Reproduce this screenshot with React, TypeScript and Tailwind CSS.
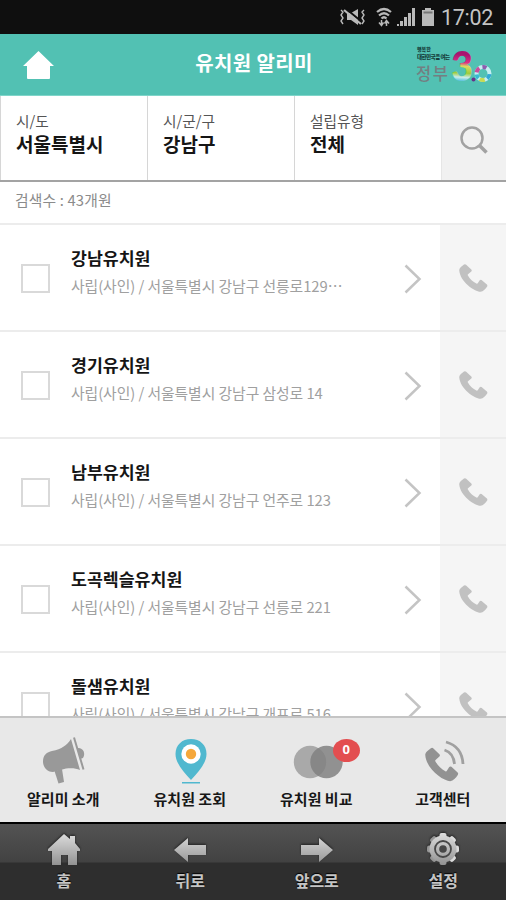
import * as React from "react";

const filters = [
  { label: "시/도", value: "서울특별시" },
  { label: "시/군/구", value: "강남구" },
  { label: "설립유형", value: "전체" },
];

const schools = [
  { id: 1, name: "강남유치원", address: "사립(사인) / 서울특별시 강남구 선릉로129⋯" },
  { id: 2, name: "경기유치원", address: "사립(사인) / 서울특별시 강남구 삼성로 14" },
  { id: 3, name: "남부유치원", address: "사립(사인) / 서울특별시 강남구 언주로 123" },
  { id: 4, name: "도곡렉슬유치원", address: "사립(사인) / 서울특별시 강남구 선릉로 221" },
  { id: 5, name: "돌샘유치원", address: "사립(사인) / 서울특별시 강남구 개포로 516" },
];

const handset =
  "M5 .6 Q6.200 -.3 7.200 .8 L12.300 5.600 Q13.200 6.600 12.300 7.500 L9 10.300 Q8.500 10.800 8.900 11.500 C10.800 14.800 14 17.900 17.400 19.600 Q18.200 20 18.700 19.300 L20.700 16.200 Q21.500 15.300 22.600 16 L27.900 20.600 Q28.800 21.600 28 22.700 C26.300 25.300 24.200 27.400 21.500 27.800 C15.500 27.600 1 18 .2 6 C.3 4 3 2 5 .6 Z";

function StatusBar() {
  return (
    <div className="flex h-[34px] shrink-0 items-center justify-end bg-[#0f0f0f] pr-[13px] text-[#b9b9b9]">
      <svg width="28" height="20" viewBox="0 0 28 20" className="mr-[9px]" fill="none" stroke="currentColor">
        <path d="M8 6h4l7-4v16l-7-5H8z" fill="currentColor" stroke="none" />
        <path d="M6 1l17 14" stroke="#0f0f0f" strokeWidth="2" />
        <path d="M5 3l17 14" strokeWidth="2.200" />
        <path d="M2 3l2 2-2 3 2 3-2 3 2 3M25 3l-2 2 2 3-2 3 2 3-2 3" strokeWidth="1.400" />
      </svg>
      <svg width="16" height="20" viewBox="0 0 16 20" className="mr-[5px]" fill="none" stroke="currentColor" strokeWidth="2.200">
        <path d="M1 5Q8-1 15 5M3 8.500Q8 4 13 8.500M5.500 11.500Q8 9 10.500 11.500" />
        <path d="M5.500 13v5M3 15.500l2.500 3 2-3M10.500 19v-5M8.500 16.500l2-3 2.500 3" strokeWidth="1.500" />
      </svg>
      <svg width="18" height="18" viewBox="0 0 18 18" className="mr-[7px]" fill="currentColor">
        <path d="M0 16h2v2H0zM3 13h3v5H3zM7 9h3v9H7zM11 5h3v13h-3zM15 0h3v18h-3z" />
      </svg>
      <svg width="12" height="18" viewBox="0 0 12 18" className="mr-[7px]" fill="currentColor">
        <path d="M3 0h6v2h3v16H0V2h3z" />
        <path d="M1.500 3.500h9v2h-9z" fill="#777" />
      </svg>
      <span className="mt-[2px] font-['Roboto',sans-serif] text-[21.500px] leading-none tracking-[-0.3px] text-[#c4c4c4]">17:02</span>
    </div>
  );
}

function GovLogo() {
  return (
    <svg width="80" height="54" viewBox="0 0 80 54" fontFamily="'Noto Sans CJK KR', sans-serif">
      <defs>
        <linearGradient id="three" gradientUnits="userSpaceOnUse" x1="46" y1="13" x2="44" y2="44">
          <stop offset=".1" stopColor="#a8156f" />
          <stop offset=".36" stopColor="#dd2f86" />
          <stop offset=".48" stopColor="#d9dd62" />
          <stop offset=".7" stopColor="#9fcb3c" />
          <stop offset=".84" stopColor="#c9ecec" />
          <stop offset="1" stopColor="#2fb1d6" />
        </linearGradient>
      </defs>
      <text x="4" y="12.500" fontSize="5" fontWeight="900" fill="#16403c">행복한</text>
      <text x="4" y="20.500" fontSize="5.500" fontWeight="900" fill="#16403c" textLength="33">대한민국을 여는</text>
      <text x="3" y="41.500" fontSize="16.500" fontWeight="500" fill="#737f82" textLength="32">정부</text>
      <text x="38" y="43" fontSize="41" fontWeight="900" fontFamily="Lato, sans-serif" fill="url(#three)" textLength="22" lengthAdjust="spacingAndGlyphs">3</text>
      <circle cx="60.500" cy="41.500" r="2" fill="#67338a" />
      <g fill="none" strokeWidth="4">
        <circle cx="70" cy="35.500" r="6.500" stroke="#c5eef2" />
        <circle cx="70" cy="35.500" r="6.500" stroke="#c94d9c" strokeDasharray="5 35.840" transform="rotate(190 70 35.500)" />
        <circle cx="70" cy="35.500" r="6.500" stroke="#8e5eb0" strokeDasharray="4 36.840" transform="rotate(265 70 35.500)" />
        <circle cx="70" cy="35.500" r="6.500" stroke="#32a8d5" strokeDasharray="5 35.840" transform="rotate(5 70 35.500)" />
        <circle cx="70" cy="35.500" r="6.500" stroke="#c7da52" strokeDasharray="5 35.840" transform="rotate(75 70 35.500)" />
        <circle cx="70" cy="35.500" r="6.500" stroke="#37bad3" strokeDasharray="4 36.840" transform="rotate(135 70 35.500)" />
      </g>
    </svg>
  );
}

function Header() {
  return (
    <header className="grid h-[62px] shrink-0 grid-cols-[100px_1fr_93px] items-center border-b border-[#7fd5c9] bg-[#52c1b3]">
      <svg width="31" height="28" viewBox="0 0 31 28" className="ml-[23px]" fill="#fff">
        <path d="M15.500 0L31 15h-4v12q0 1-1 1H5q-1 0-1-1V15H0z" />
      </svg>
      <h1 className="-mt-[4px] pr-[5px] text-center text-[20px] leading-[28px] font-bold tracking-[0.400px] text-white">유치원 알리미</h1>
      <GovLogo />
    </header>
  );
}

function SearchBar() {
  return (
    <div className="flex h-[86px] shrink-0 border-b-2 border-[#a3a3a3]">
      {filters.map((filter) => (
        <div key={filter.label} className="w-[147px] border-l border-[#d6d6d6] pt-[14px] pl-[15px]">
          <div className="text-[14.700px] leading-[22px] text-[#555]">{filter.label}</div>
          <div className="text-[19px] leading-[24px] font-bold text-[#151515]">{filter.value}</div>
        </div>
      ))}
      <div className="flex flex-1 items-center justify-center border-l border-[#e6e6e6] bg-[#f1f1f1]">
        <svg width="28" height="28" viewBox="0 0 28 28" className="mt-[4px]" fill="none" stroke="#a2a2a2">
          <circle cx="12" cy="12" r="10.500" strokeWidth="2.500" />
          <path d="M19.500 19.500l7 7" strokeWidth="3.500" />
        </svg>
      </div>
    </div>
  );
}

function SchoolRow({ school }: { school: { name: string; address: string } }) {
  return (
    <li className="flex h-[107px] shrink-0 border-b-2 border-[#ececec]">
      <div className="mt-[39px] ml-[21px] size-[29px] shrink-0 border-2 border-[#d9d9d9]" />
      <div className="flex-1 pt-[19px] pl-[21px] whitespace-nowrap">
        <div className="text-[17.300px] leading-[28px] font-bold text-[#151515]">{school.name}</div>
        <div className="text-[14.800px] leading-[28px] tracking-[-0.050px] text-[#a0a0a0]">{school.address}</div>
      </div>
      <svg width="18" height="30" viewBox="0 0 18 30" className="mt-[39px] mr-[18px] shrink-0" fill="none" stroke="#c4c4c4" strokeWidth="2.500">
        <path d="M1.500 1.500L15.500 15L1.500 28.500" />
      </svg>
      <div className="flex w-[66px] shrink-0 justify-center bg-[#f5f5f5] pt-[39px]">
        <svg width="29" height="29" viewBox="0 0 29 29" fill="#c1c1c1">
          <path d={handset} />
        </svg>
      </div>
    </li>
  );
}

function TabBar() {
  return (
    <nav className="grid h-[106px] shrink-0 grid-cols-4 border-t-2 border-[#c4c4c4] bg-[#e8e8e8] text-center text-[15px] leading-[24px] font-bold text-[#171717]">
      <div className="flex flex-col items-center pt-[17px]">
        <svg width="44" height="52" viewBox="0 0 44 52" fill="#999" className="ml-[2px]">
          <path d="M29 4L38 35C34 33 29 33 24 33.500L11 37C5 37 1 32 1 26.500C1 20 5 17 10 16C20 14 25 10 29 4Z" />
          <path d="M12.500 36l7.500-2 2 13-5.500 1.500z" />
          <path d="M35 13c6-1 9 5 6 10l-3 1z" />
          <path d="M30.500 3L40 35" stroke="#e8e8e8" strokeWidth="1.500" />
          <path d="M32 2.500L41.500 34.500" stroke="#999" strokeWidth="2" />
        </svg>
        알리미 소개
      </div>
      <div className="flex flex-col items-center pt-[17px]">
        <svg width="34" height="52" viewBox="0 0 34 52" className="ml-[2px]">
          <path d="M17 4C8 4 1.500 10 1.500 19C1.500 28 9 36 17 45C25 36 32.500 28 32.500 19C32.500 10 26 4 17 4Z" fill="#50b8cf" />
          <circle cx="17" cy="19" r="9.700" fill="#fff" />
          <circle cx="17" cy="19" r="5.200" fill="#f5a83b" />
          <path d="M8 47h18v1.500H8z" fill="#50b8cf" />
        </svg>
        유치원 조회
      </div>
      <div className="flex flex-col items-center pt-[17px]">
        <div className="relative ml-[3px] h-[52px] w-[50px]">
          <svg width="50" height="52" viewBox="0 0 50 52">
            <circle cx="17" cy="27" r="16.200" fill="#a9a9a9" />
            <circle cx="33.500" cy="27" r="16.200" fill="#808080" fillOpacity=".83" />
          </svg>
          <span className="absolute top-[4px] left-[40px] h-[23px] w-[27px] rounded-[50%] bg-[#e34e50] font-['Open_Sans',sans-serif] text-[13px] leading-[21px] text-white">0</span>
        </div>
        유치원 비교
      </div>
      <div className="flex flex-col items-center pt-[17px]">
        <svg width="44" height="52" viewBox="0 0 44 52" className="ml-[2px]">
          <path d={handset} transform="translate(3 12.500) scale(1.170 1.210)" fill="#929292" />
          <g fill="none" stroke="#a0a0a0" strokeWidth="2.800">
            <path d="M22.500 15Q31.500 18 32.500 29" />
            <path d="M24 7Q40 11.500 41 29" />
          </g>
        </svg>
        고객센터
      </div>
    </nav>
  );
}

function BottomBar() {
  const items = [
    { label: "홈", icon: <path d="M16 1L22 6V3h5v7l5 6v2h-3v14h-9V22h-7v10H4V18H0v-2z" /> },
    { label: "뒤로", icon: <path d="M0 17L14 5v7h18v10H14v7z" /> },
    { label: "앞으로", icon: <path d="M32 17L18 5v7H0v10h18v7z" /> },
    {
      label: "설정",
      icon: (
        <>
          {[0, 45, 90, 135].map((angle) => (
            <rect key={angle} x="12.500" y="0" width="7" height="32" rx="2" transform={`rotate(${angle} 16 16)`} />
          ))}
          <circle cx="16" cy="16" r="13.500" />
          <circle cx="16" cy="16" r="8" fill="none" stroke="#474747" strokeWidth="1.800" />
          <circle cx="16" cy="16" r="3.800" fill="#474747" />
        </>
      ),
    },
  ];

  return (
    <nav className="grid h-[78px] shrink-0 grid-cols-4 border-t-2 border-black bg-[#2e2e2e] bg-[linear-gradient(to_bottom,#535353_0px,#424242_38px,#2e2e2e_39px,#2e2e2e_100%)]">
      {items.map((item) => (
        <div key={item.label} className="flex flex-col items-center pt-[9px] pl-[1px] text-[16px] leading-[26px] font-bold text-[#c5c5c5] [text-shadow:0_-1px_1px_#000]">
          <svg width="32" height="33" viewBox="0 0 32 33" fill="url(#metal)" className="mb-px shrink-0 drop-shadow-[0_-1px_1px_#222]">
            <defs>
              <linearGradient id="metal" gradientUnits="userSpaceOnUse" x1="0" y1="0" x2="0" y2="32">
                <stop offset="0" stopColor="#dedede" />
                <stop offset="1" stopColor="#929292" />
              </linearGradient>
            </defs>
            {item.icon}
          </svg>
          {item.label}
        </div>
      ))}
    </nav>
  );
}

export default function App() {
  return (
    <div className="flex h-[900px] w-[506px] flex-col overflow-hidden bg-white font-['Noto_Sans_CJK_KR',sans-serif]">
      <StatusBar />
      <Header />
      <SearchBar />
      <div className="h-[43px] shrink-0 border-b-2 border-[#ececec] pt-[5px] pl-[15px] text-[14.800px] leading-[26px] tracking-[0.150px] text-[#8b8b8b]">
        검색수 : 43개원
      </div>
      <ul className="flex min-h-0 flex-1 flex-col overflow-hidden">
        {schools.map((school) => (
          <SchoolRow key={school.id} school={school} />
        ))}
      </ul>
      <TabBar />
      <BottomBar />
    </div>
  );
}
